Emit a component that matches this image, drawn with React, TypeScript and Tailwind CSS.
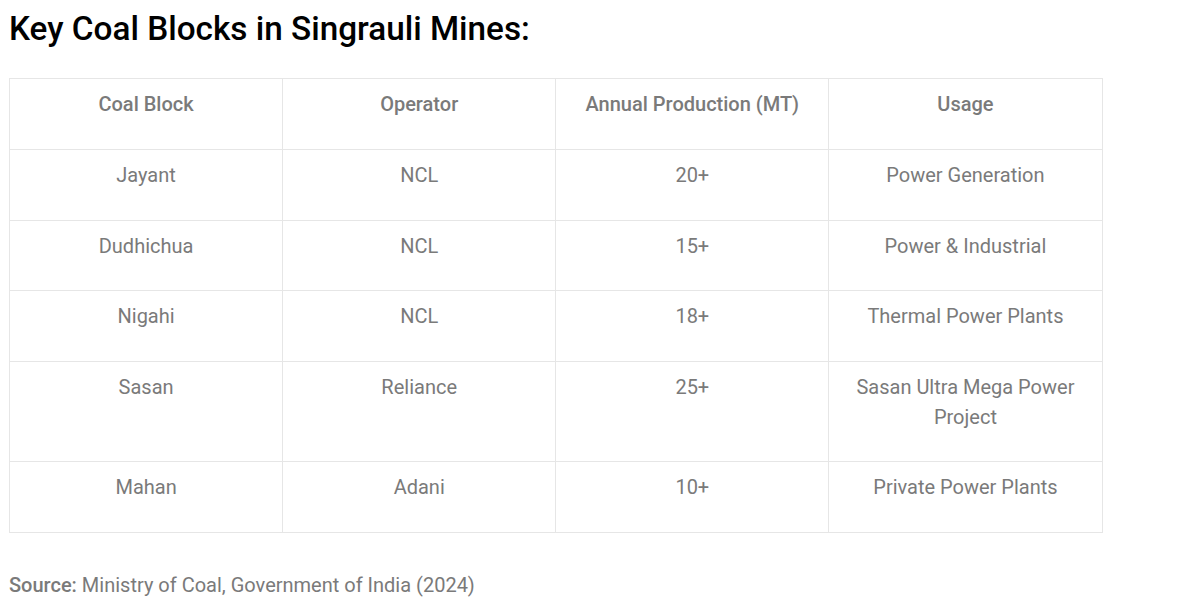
import React from "react";

const rows = [
  ["Jayant", "NCL", "20+", "Power Generation"],
  ["Dudhichua", "NCL", "15+", "Power & Industrial"],
  ["Nigahi", "NCL", "18+", "Thermal Power Plants"],
  ["Sasan", "Reliance", "25+", "Sasan Ultra Mega Power Project"],
  ["Mahan", "Adani", "10+", "Private Power Plants"],
];

export default function App() {
  return (
    <div className="bg-white min-h-[612px] px-[9px] pt-[8px]" style={{ fontFamily: "Roboto, 'Liberation Sans', sans-serif" }}>
      <h2 className="text-[33.3px] leading-[42px] font-medium text-black">Key Coal Blocks in Singrauli Mines:</h2>
      <table className="mt-[28px] w-[1093.5px] border-collapse table-fixed text-[20px] text-[#7a7a7a]">
        <thead>
          <tr>
            {["Coal Block", "Operator", "Annual Production (MT)", "Usage"].map((h) => (
              <th key={h} className="border border-[#e6e6e6] font-medium text-center align-top px-[20px] pt-[10px] pb-[30px] leading-[30px]">
                {h}
              </th>
            ))}
          </tr>
        </thead>
        <tbody>
          {rows.map((r) => (
            <tr key={r[0]}>
              {r.map((c, i) => (
                <td key={i} className="border border-[#e6e6e6] text-center align-top px-[20px] pt-[10px] pb-[29.5px] leading-[30px]">
                  {c}
                </td>
              ))}
            </tr>
          ))}
        </tbody>
      </table>
      <p className="mt-[37px] text-[20px] leading-[30px] text-[#7a7a7a]">
        <span className="font-medium">Source:</span> Ministry of Coal, Government of India (2024)
      </p>
    </div>
  );
}
